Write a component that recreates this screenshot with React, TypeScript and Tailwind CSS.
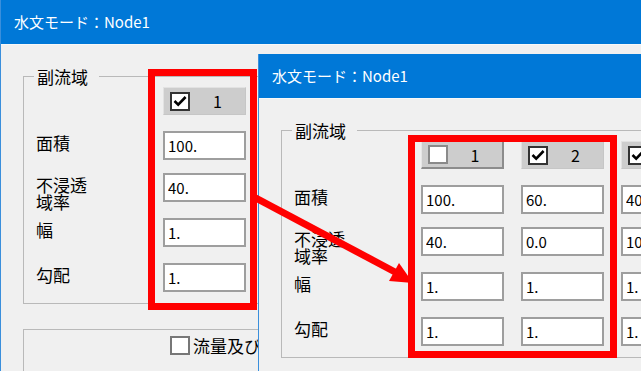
import React from "react";

type Column = {
  label: string;
  checked: boolean;
  pressed?: boolean;
  values: string[];
};

const labels: string[][] = [["面積"], ["不浸透", "域率"], ["幅"], ["勾配"]];
const rowGaps = ["mt-[16px]", "mt-[13px]", "mt-[16px]", "mt-[16px]"];

const backColumns: Column[] = [
  { label: "1", checked: true, values: ["100.", "40.", "1.", "1."] },
  { label: "2", checked: true, values: ["60.", "0.0", "1.", "1."] },
  { label: "3", checked: true, values: ["40.", "100.", "1.", "1."] },
];

const frontColumns: Column[] = [
  { label: "1", checked: false, pressed: true, values: ["100.", "40.", "1.", "1."] },
  { label: "2", checked: true, values: ["60.", "0.0", "1.", "1."] },
  { label: "3", checked: true, values: ["40.", "100.", "1.", "1."] },
];

const CheckBox = ({ checked, light }: { checked: boolean; light?: boolean }) => (
  <span
    className={`flex h-[19px] w-[20px] shrink-0 items-center justify-center border-2 bg-white ${
      checked ? "border-[#333333]" : light ? "border-[#777777]" : "border-[#8a8a8a]"
    }`}
  >
    {checked && (
      <svg width="14" height="12" viewBox="0 0 14 12">
        <path d="M1.5 6 L5.2 9.6 L12.6 2" fill="none" stroke="#000" strokeWidth="2.6" />
      </svg>
    )}
  </span>
);

const HeaderCell = ({ col }: { col: Column }) => (
  <div
    className={`flex h-[28px] items-center bg-[#cdcdcd] pl-[6px] ${
      col.pressed
        ? "border-t border-l border-r-2 border-b-2 border-t-[#e6e6e6] border-l-[#e6e6e6] border-r-[#8c8c8c] border-b-[#8c8c8c]"
        : "border border-[#c6c6c6] border-t-[#e2e2e2] border-l-[#e2e2e2]"
    }`}
  >
    <CheckBox checked={col.checked} />
    <span className="flex-1 text-center text-[16px] leading-none text-black">{col.label}</span>
  </div>
);

const Field = ({ value }: { value: string }) => (
  <input
    readOnly
    value={value}
    className="h-[29px] w-[83px] border-2 border-[#9e9e9e] bg-white pl-[3px] text-[15px] text-black outline-none"
  />
);

const Window = ({
  columns,
  className,
  withOutput,
}: {
  columns: Column[];
  className: string;
  withOutput?: boolean;
}) => (
  <div className={`absolute flex flex-col border-l border-[#3a8fdc] bg-[#f0f0f0] ${className}`}>
    <div className="flex h-[44px] shrink-0 items-center bg-[#0078d7] pl-[13px] text-[15px] text-white">
      水文モード：Node1
    </div>
    <div className="border-t border-[#f8f8f8] pl-[22px] pt-[23px]">
      <fieldset className="w-[420px] border border-[#b9b9b9] pb-[11px] pl-[12px] pt-[2px]">
        <legend className="-ml-[2px] pl-[3px] pr-[11px] text-[17px] leading-[17px] text-black">
          副流域
        </legend>
        <div className="grid grid-cols-[110px_83px_83px_83px] gap-x-[17px]">
          <div />
          {columns.map((c) => (
            <HeaderCell key={c.label} col={c} />
          ))}
        </div>
        {labels.map((lines, r) => (
          <div
            key={r}
            className={`grid h-[29px] grid-cols-[110px_83px_83px_83px] gap-x-[17px] ${rowGaps[r]}`}
          >
            <div className="pt-[3px] text-[17px] leading-[17px] text-black">
              {lines.map((l) => (
                <div key={l}>{l}</div>
              ))}
            </div>
            {columns.map((c) => (
              <Field key={c.label} value={c.values[r]} />
            ))}
          </div>
        ))}
      </fieldset>
      {withOutput && (
        <div className="mt-[25px] h-[80px] w-[420px] border border-[#b9b9b9] pl-[146px] pt-[6px]">
          <div className="flex items-center gap-[3px]">
            <CheckBox checked={false} light />
            <span className="text-[17px] leading-[17px] text-black">流量及び水位を出力</span>
          </div>
        </div>
      )}
    </div>
  </div>
);

export default function App() {
  return (
    <div
      className="relative h-[371px] w-[641px] overflow-hidden bg-[#f0f0f0]"
      style={{ fontFamily: '"Noto Sans CJK JP", "Noto Sans", sans-serif' }}
    >
      <Window columns={backColumns} className="left-0 top-0 h-[371px] w-[641px]" withOutput />
      <div className="absolute left-[148px] top-[69px] h-[241px] w-[109px] border-[7px] border-[#ff0000]" />
      <Window columns={frontColumns} className="left-[258px] top-[54px] h-[330px] w-[400px]" />
      <div className="absolute left-[408px] top-[135px] h-[223px] w-[209px] border-[7px] border-[#ff0000]" />
      <svg className="absolute left-0 top-0" width="641" height="371" viewBox="0 0 641 371">
        <line x1="254" y1="197" x2="395" y2="272" stroke="#ff0000" strokeWidth="7" />
        <polygon points="413,283 389,281 399,263" fill="#ff0000" />
      </svg>
    </div>
  );
}
